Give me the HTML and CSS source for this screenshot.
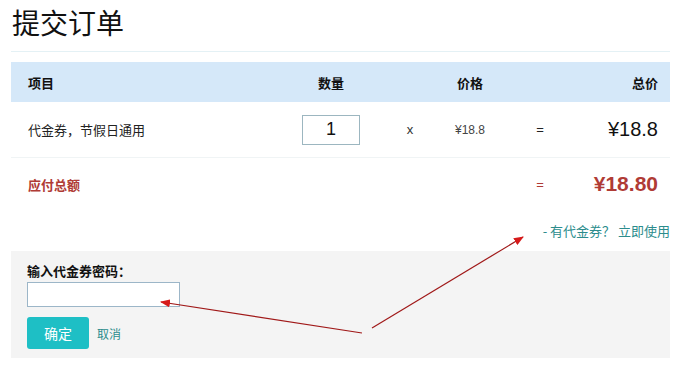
FILE: index.html
```html
<!DOCTYPE html>
<html lang="zh-CN">
<head>
    <meta charset="UTF-8">
    <title>提交订单</title>
    <link rel="stylesheet" href="styles.css">
</head>
<body>
    <div class="page">
        <h1 class="title">提交订单</h1>

        <div class="order">
            <div class="row head">
                <span class="c-item">项目</span>
                <span class="c-qty">数量</span>
                <span class="c-x"></span>
                <span class="c-price">价格</span>
                <span class="c-eq"></span>
                <span class="c-total">总价</span>
            </div>
            <div class="row line">
                <span class="c-item">代金券，节假日通用</span>
                <span class="c-qty"><input class="qty-input" type="text" value="1"></span>
                <span class="c-x">x</span>
                <span class="c-price">¥18.8</span>
                <span class="c-eq">=</span>
                <span class="c-total total-num">¥18.8</span>
            </div>
            <div class="row sum">
                <span class="c-item">应付总额</span>
                <span class="c-qty"></span>
                <span class="c-x"></span>
                <span class="c-price"></span>
                <span class="c-eq">=</span>
                <span class="c-total sum-num">¥18.80</span>
            </div>
        </div>

        <p class="coupon-link"><a href="#">- 有代金券？ 立即使用</a></p>

        <div class="coupon-box">
            <label class="coupon-label" for="coupon">输入代金券密码：</label>
            <input class="coupon-input" type="text" id="coupon">
            <div class="coupon-actions">
                <button class="btn-ok" type="button">确定</button>
                <a class="btn-cancel" href="#">取消</a>
            </div>
        </div>

        <!-- annotation arrows drawn over the page -->
        <svg class="arrows" width="687" height="371" viewBox="0 0 687 371">
            <defs>
                <marker id="head" markerWidth="10" markerHeight="8" refX="9" refY="4" orient="auto" markerUnits="userSpaceOnUse">
                    <path d="M0,0 L10,4 L0,8 Z" fill="#d61a1a"/>
                </marker>
            </defs>
            <line x1="372" y1="328" x2="523" y2="237" stroke="#a01818" stroke-width="1.2" marker-end="url(#head)"/>
            <line x1="362" y1="333" x2="161" y2="302" stroke="#a01818" stroke-width="1.2" marker-end="url(#head)"/>
        </svg>
    </div>
</body>
</html>
```

FILE: styles.css
```css
body {
    margin: 0;
    padding: 0;
    font-family: "Noto Sans CJK SC", "Liberation Sans", sans-serif;
    font-size: 13px;
    color: #222;
    background: #fff;
}

.page {
    position: relative;
    width: 687px;
    height: 371px;
    padding: 0 17px 0 11px;
    box-sizing: border-box;
}

.title {
    margin: 0;
    padding: 4px 0 0 1px;
    height: 47px;
    font-size: 28px;
    font-weight: normal;
    line-height: 36px;
    color: #111;
    border-bottom: 1px solid #e4f1f5;
}

.order {
    margin-top: 10px;
}

.row {
    display: grid;
    grid-template-columns: 280px 80px 78px 42px 98px 1fr;
    align-items: center;
}

.row > span {
    justify-self: center;
    white-space: nowrap;
}

.row .c-item {
    justify-self: start;
    padding-left: 17px;
}

.row .c-total {
    justify-self: end;
    padding-right: 12px;
}

.head {
    height: 40px;
    background: #d5e8f9;
    font-weight: bold;
    color: #111;
}

.line {
    height: 55px;
    border-bottom: 1px solid #f0f4f5;
}

.qty-input {
    width: 58px;
    height: 30px;
    box-sizing: border-box;
    border: 1px solid #9cb6c0;
    text-align: center;
    font-family: "Liberation Sans", sans-serif;
    font-size: 18px;
    color: #111;
    padding: 0;
    outline: none;
}

.line .c-x {
    font-family: "Liberation Sans", sans-serif;
    font-size: 13px;
    color: #333;
}

.line .c-price {
    font-family: "Liberation Sans", sans-serif;
    font-size: 12px;
    color: #444;
}

.c-eq {
    font-family: "Liberation Sans", sans-serif;
    font-size: 13px;
}

.total-num {
    font-family: "Liberation Sans", sans-serif;
    font-size: 20px;
    color: #111;
}

.sum {
    height: 52px;
    color: #b03b35;
}

.sum .c-item {
    font-weight: bold;
}

.sum-num {
    font-family: "Liberation Sans", sans-serif;
    font-size: 21px;
    font-weight: bold;
}

.coupon-link {
    margin: 11px 0 0;
    height: 20px;
    line-height: 20px;
    text-align: right;
    font-size: 13px;
}

.coupon-link a {
    color: #2b8c8c;
    text-decoration: none;
}

.coupon-box {
    margin-top: 10px;
    background: #f4f4f4;
    padding: 11px 16px 9px;
    height: 87px;
}

.coupon-label {
    display: block;
    font-weight: bold;
    font-size: 13px;
    color: #111;
    line-height: 18px;
}

.coupon-input {
    display: block;
    margin-top: 2px;
    width: 153px;
    height: 25px;
    box-sizing: border-box;
    border: 1px solid #9cb6c8;
    background: #fff;
    outline: none;
}

.coupon-actions {
    display: flex;
    align-items: center;
    gap: 8px;
    margin-top: 10px;
}

.btn-ok {
    width: 62px;
    height: 32px;
    border: none;
    border-radius: 3px;
    background: #1ebfc5;
    color: #fff;
    font-family: "Noto Sans CJK SC", sans-serif;
    font-size: 14px;
    cursor: pointer;
}

.btn-cancel {
    color: #2b8c8c;
    font-size: 12px;
    text-decoration: none;
}

.arrows {
    position: absolute;
    left: 0;
    top: 0;
    pointer-events: none;
}
```
